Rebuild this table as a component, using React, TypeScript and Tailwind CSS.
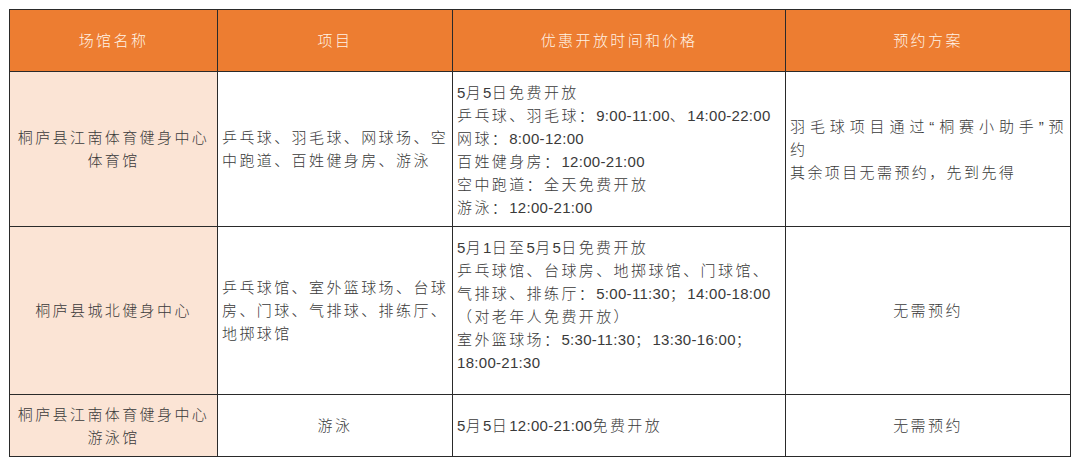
import React from "react";

type Align = "left" | "center";

interface Cell {
  lines: string[];
  align: Align;
  valign?: "top" | "middle";
  justifyFirst?: boolean;
}

interface Row {
  height: string;
  cells: Cell[];
}

const HEADERS = ["场馆名称", "项目", "优惠开放时间和价格", "预约方案"];

const ROWS: Row[] = [
  {
    height: "h-[155px]",
    cells: [
      { lines: ["桐庐县江南体育健身中心", "体育馆"], align: "center" },
      { lines: ["乒乓球、羽毛球、网球场、空", "中跑道、百姓健身房、游泳"], align: "left", justifyFirst: true },
      {
        lines: [
          "5月5日免费开放",
          "乒乓球、羽毛球：9:00-11:00、14:00-22:00",
          "网球：8:00-12:00",
          "百姓健身房：12:00-21:00",
          "空中跑道：全天免费开放",
          "游泳：12:00-21:00",
        ],
        align: "left",
        valign: "top",
      },
      {
        lines: ["羽毛球项目通过“桐赛小助手”预", "约", "其余项目无需预约，先到先得"],
        align: "left",
        justifyFirst: true,
      },
    ],
  },
  {
    height: "h-[168px]",
    cells: [
      { lines: ["桐庐县城北健身中心"], align: "center" },
      {
        lines: ["乒乓球馆、室外篮球场、台球", "房、门球、气排球、排练厅、", "地掷球馆"],
        align: "left",
      },
      {
        lines: [
          "5月1日至5月5日免费开放",
          "乒乓球馆、台球房、地掷球馆、门球馆、",
          "气排球、排练厅：5:00-11:30；14:00-18:00",
          "（对老年人免费开放）",
          "室外篮球场：5:30-11:30；13:30-16:00；",
          "18:00-21:30",
        ],
        align: "left",
        valign: "top",
      },
      { lines: ["无需预约"], align: "center" },
    ],
  },
  {
    height: "h-[62px]",
    cells: [
      { lines: ["桐庐县江南体育健身中心", "游泳馆"], align: "center" },
      { lines: ["游泳"], align: "center" },
      { lines: ["5月5日12:00-21:00免费开放"], align: "left" },
      { lines: ["无需预约"], align: "center" },
    ],
  },
];

// latin runs get normal spacing, CJK runs get the wide spacing of the source sheet
function Runs({ text }: { text: string }) {
  const parts = text.match(/[\u0000-\u00ff]+|[^\u0000-\u00ff]+/g) ?? [];
  return (
    <>
      {parts.map((p, i) =>
        /^[\u0000-\u00ff]+$/.test(p) ? (
          <span key={i} className="tracking-[0.3px]">
            {p}
          </span>
        ) : (
          <span key={i} className="font-light tracking-[2.4px]">
            {p}
          </span>
        )
      )}
    </>
  );
}

export default function App() {
  return (
    <div className="min-h-[466px] bg-white pl-[9px] pt-[9px] font-['Liberation_Sans','Noto_Sans_CJK_SC',sans-serif] text-[15px] leading-[23px] text-[#3a3a3a]">
      <table className="w-[1061px] table-fixed border-collapse">
        <colgroup>
          <col className="w-[208px]" />
          <col className="w-[235px]" />
          <col className="w-[333px]" />
          <col className="w-[285px]" />
        </colgroup>
        <thead>
          <tr className="h-[62px] bg-[#ed7d31]">
            {HEADERS.map((h) => (
              <th key={h} className="border border-[#2a2a2a] text-center align-middle font-normal text-[#fff3e6]">
                <Runs text={h} />
              </th>
            ))}
          </tr>
        </thead>
        <tbody>
          {ROWS.map((row, ri) => (
            <tr key={ri} className={row.height}>
              {row.cells.map((c, ci) => (
                <td
                  key={ci}
                  className={
                    (ci === 0 ? "bg-[#fbe4d5] " : "bg-white ") +
                    (c.valign === "top" ? "align-top pt-[9px] " : "align-middle ") +
                    (c.align === "center" ? "text-center " : "text-left ") +
                    "border border-[#2a2a2a] px-[4px]"
                  }
                >
                  {c.lines.map((l, li) => (
                    <div
                      key={li}
                      className={
                        "whitespace-nowrap " + (c.justifyFirst && li === 0 ? "[text-align-last:justify]" : "")
                      }
                    >
                      <Runs text={l} />
                    </div>
                  ))}
                </td>
              ))}
            </tr>
          ))}
        </tbody>
      </table>
    </div>
  );
}
